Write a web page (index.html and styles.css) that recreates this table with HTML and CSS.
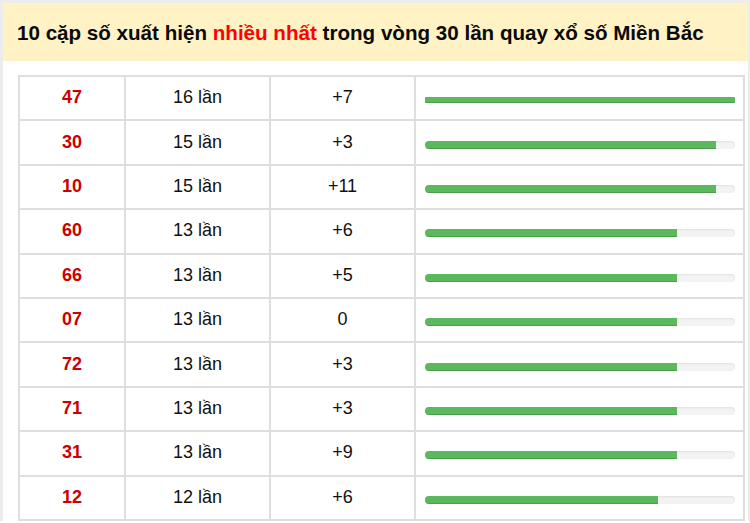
FILE: index.html
```html
<!DOCTYPE html>
<html lang="vi">
<head>
<meta charset="utf-8">
<link rel="stylesheet" href="styles.css">
</head>
<body>
<div class="box">
  <div class="head">10 cặp số xuất hiện <span class="hot">nhiều nhất</span> trong vòng 30 lần quay xổ số Miền Bắc</div>
  <div class="content">
    <table class="stats">
      <colgroup><col class="c1"><col class="c2"><col class="c3"><col class="c4"></colgroup>
      <tr><td class="num">47</td><td>16 lần</td><td>+7</td><td class="barcell"><div class="track full"><div class="fill" style="width:100%"></div></div></td></tr>
      <tr><td class="num">30</td><td>15 lần</td><td>+3</td><td class="barcell"><div class="track"><div class="fill" style="width:93.75%"></div></div></td></tr>
      <tr><td class="num">10</td><td>15 lần</td><td>+11</td><td class="barcell"><div class="track"><div class="fill" style="width:93.75%"></div></div></td></tr>
      <tr><td class="num">60</td><td>13 lần</td><td>+6</td><td class="barcell"><div class="track"><div class="fill" style="width:81.25%"></div></div></td></tr>
      <tr><td class="num">66</td><td>13 lần</td><td>+5</td><td class="barcell"><div class="track"><div class="fill" style="width:81.25%"></div></div></td></tr>
      <tr><td class="num">07</td><td>13 lần</td><td>0</td><td class="barcell"><div class="track"><div class="fill" style="width:81.25%"></div></div></td></tr>
      <tr><td class="num">72</td><td>13 lần</td><td>+3</td><td class="barcell"><div class="track"><div class="fill" style="width:81.25%"></div></div></td></tr>
      <tr><td class="num">71</td><td>13 lần</td><td>+3</td><td class="barcell"><div class="track"><div class="fill" style="width:81.25%"></div></div></td></tr>
      <tr><td class="num">31</td><td>13 lần</td><td>+9</td><td class="barcell"><div class="track"><div class="fill" style="width:81.25%"></div></div></td></tr>
      <tr><td class="num">12</td><td>12 lần</td><td>+6</td><td class="barcell"><div class="track"><div class="fill" style="width:75%"></div></div></td></tr>
    </table>
  </div>
</div>
</body>
</html>
```
FILE: styles.css
```css
html, body {
  margin: 0;
  padding: 0;
  background: #fff;
}
body {
  font-family: "Liberation Sans", Arial, sans-serif;
  color: #111;
}
.box {
  width: 745px;
  border-top: 3px solid #ececec;
  border-left: 3px solid #ececec;
  border-right: 2px solid #ececec;
}
.head {
  background: #fff2c4;
  height: 58px;
  line-height: 60px;
  padding-left: 14px;
  font-size: 20.6px;
  font-weight: bold;
  color: #0a0a0a;
  white-space: nowrap;
}
.hot {
  color: #ff0000;
}
.content {
  padding: 14px 3px 0 15px;
}
.stats {
  width: 727px;
  border-collapse: collapse;
  table-layout: fixed;
  border: 2px solid #dedede;
}
.c1 { width: 106px; }
.c2 { width: 145px; }
.c3 { width: 145px; }
.c4 { width: auto; }
.stats tr {
  height: 44.4px;
}
.stats td {
  border: 2px solid #dedede;
  padding: 0 0 2px;
  line-height: 20px;
  text-align: center;
  font-size: 18px;
  vertical-align: middle;
}
.stats td.num {
  color: #cc0000;
  font-weight: bold;
}
.stats td.barcell {
  padding: 4px 8px 0 9px;
  text-align: left;
}
.track {
  height: 8px;
  background: #f3f3f3;
  border-radius: 4px;
  box-shadow: inset 0 1px 2px rgba(0,0,0,0.08);
  overflow: hidden;
}
.track.full {
  height: 6px;
  border-radius: 1px;
}
.fill {
  height: 100%;
  background: #5cb85c;
  box-shadow: inset 0 -1px 0 rgba(0,0,0,0.15);
}
```
